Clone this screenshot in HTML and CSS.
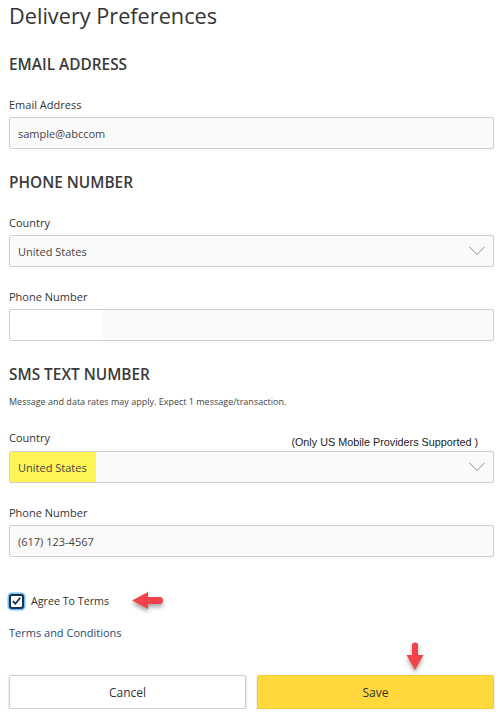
FILE: index.html
```html
<!DOCTYPE html>
<html lang="en">
<head>
    <meta charset="UTF-8">
    <title>Delivery Preferences</title>
    <link rel="stylesheet" href="styles.css">
</head>
<body>
    <div class="page">
        <h1 class="page-title">Delivery Preferences</h1>

        <section class="group">
            <h2 class="group-title">EMAIL ADDRESS</h2>
            <label class="field-label" for="email">Email Address</label>
            <input class="field" type="text" id="email" value="sample@abccom">
        </section>

        <section class="group">
            <h2 class="group-title">PHONE NUMBER</h2>
            <label class="field-label">Country</label>
            <div class="field select">
                <span class="select-value">United States</span>
                <svg class="chevron" width="16" height="10" viewBox="0 0 16 10"><polyline points="0.5,1 8,8.5 15.5,1" fill="none" stroke="#8a8a8a" stroke-width="1"/></svg>
            </div>

            <label class="field-label" for="phone">Phone Number</label>
            <input class="field field-blank" type="text" id="phone" value="">
        </section>

        <section class="group">
            <h2 class="group-title">SMS TEXT NUMBER</h2>
            <p class="note">Message and data rates may apply. Expect 1 message/transaction.</p>
            <div class="label-row">
                <label class="field-label">Country</label>
                <span class="provider-note">(Only US Mobile Providers Supported )</span>
            </div>
            <div class="field select">
                <span class="select-value highlight">United States</span>
                <svg class="chevron" width="16" height="10" viewBox="0 0 16 10"><polyline points="0.5,1 8,8.5 15.5,1" fill="none" stroke="#8a8a8a" stroke-width="1"/></svg>
            </div>

            <label class="field-label" for="sms">Phone Number</label>
            <input class="field" type="text" id="sms" value="(617) 123-4567">
        </section>

        <div class="check-row">
            <span class="checkbox">
                <svg width="12" height="12" viewBox="0 0 12 12"><polyline points="2,6.2 4.8,9 10,2.5" fill="none" stroke="#1c2f4d" stroke-width="2"/></svg>
            </span>
            <span class="check-text">Agree To Terms</span>

            <!-- annotation -->
            <svg class="arrow arrow-left" width="34" height="22" viewBox="0 0 34 22">
                <path d="M1 9.5 L17 1 L17 6 L29 6 Q32 6 32 9.5 Q32 13 29 13 L17 13 L17 18 Z" fill="#f0434c"/>
            </svg>
        </div>

        <a class="terms-link" href="#">Terms and Conditions</a>

        <div class="actions">
            <button class="btn btn-cancel" type="button">Cancel</button>
            <button class="btn btn-save" type="button">Save</button>

            <!-- annotation -->
            <svg class="arrow arrow-down" width="22" height="32" viewBox="0 0 22 32">
                <path d="M8 3 Q8 0.5 11 0.5 Q14 0.5 14 3 L14 13 L19.5 13 L11 28 L2.5 13 L8 13 Z" fill="#f0434c"/>
            </svg>
        </div>
    </div>
</body>
</html>
```

FILE: styles.css
```css
body {
    margin: 0;
    background: #fff;
    font-family: "Open Sans", "Noto Sans", sans-serif;
    color: #333;
}

.page {
    position: relative;
    padding: 0 8px 0 9px;
}

.page-title {
    margin: 0;
    font-size: 21.7px;
    font-weight: 400;
    line-height: 32px;
    color: #333;
}

.group {
    margin-top: 23px;
}

.group:first-of-type {
    margin-top: 22px;
}

.group-title {
    margin: 0;
    font-size: 15.4px;
    font-weight: 600;
    line-height: 22px;
    color: #3a3a3a;
}

.field-label {
    display: block;
    margin: 21px 0 4px;
    font-size: 11px;
    line-height: 16px;
    color: #333;
}

.field {
    display: block;
    width: 100%;
    height: 32px;
    box-sizing: border-box;
    margin: 0;
    padding: 0 8px;
    border: 1px solid #cfcfcf;
    border-radius: 2px;
    background: #fafafa;
    font-family: inherit;
    font-size: 11px;
    color: #444;
    outline: none;
}

.field + .field-label {
    margin-top: 22px;
}

.field-blank {
    background: linear-gradient(to right, #fff 93px, #fafafa 93px);
    background-clip: padding-box;
}

.select {
    display: flex;
    align-items: center;
    justify-content: space-between;
    padding: 0 8px 0 0;
}

.select-value {
    padding-left: 8px;
}

.select-value.highlight {
    align-self: stretch;
    display: flex;
    align-items: center;
    padding: 0 9px 0 8px;
    margin: 0;
    background: #fff455;
}

.note {
    margin: 10px 0 0;
    font-size: 9px;
    line-height: 12px;
    color: #444;
}

.label-row {
    display: flex;
    justify-content: space-between;
    align-items: flex-end;
    margin: 22px 0 5px;
}

.label-row .field-label {
    margin: 0;
}

.provider-note {
    position: relative;
    top: 3px;
    padding-right: 16px;
    font-family: "Liberation Sans", Arial, sans-serif;
    font-size: 10.8px;
    line-height: 14px;
    color: #222;
}

.check-row {
    position: relative;
    display: flex;
    align-items: center;
    height: 20px;
    margin-top: 34px;
}

.checkbox {
    display: flex;
    align-items: center;
    justify-content: center;
    width: 15px;
    height: 15px;
    box-sizing: border-box;
    border: 2px solid #1c2f4d;
    border-radius: 3px;
    background: #fff;
    box-shadow: 0 0 0 1.5px #6ec0f4;
}

.check-text {
    margin-left: 7px;
    font-size: 10.7px;
    color: #333;
}

.arrow {
    position: absolute;
    filter: drop-shadow(0 3px 2px rgba(0, 0, 0, 0.35));
}

.arrow-left {
    left: 122px;
    top: 0;
}

.terms-link {
    display: block;
    margin-top: 14px;
    font-size: 11px;
    line-height: 16px;
    color: #2b4a72;
    text-decoration: none;
}

.actions {
    position: relative;
    display: flex;
    gap: 11px;
    margin-top: 34px;
}

.btn {
    flex: 1;
    height: 34px;
    border-radius: 2px;
    font-family: inherit;
    font-size: 12px;
    color: #333;
    cursor: pointer;
    box-shadow: 0 1px 2px rgba(0, 0, 0, 0.25);
}

.btn-cancel {
    background: #fff;
    border: 1px solid #cfcfcf;
}

.btn-save {
    background: #fed83d;
    border: 1px solid #f0cc35;
}

.arrow-down {
    right: 68px;
    top: -33px;
}
```
